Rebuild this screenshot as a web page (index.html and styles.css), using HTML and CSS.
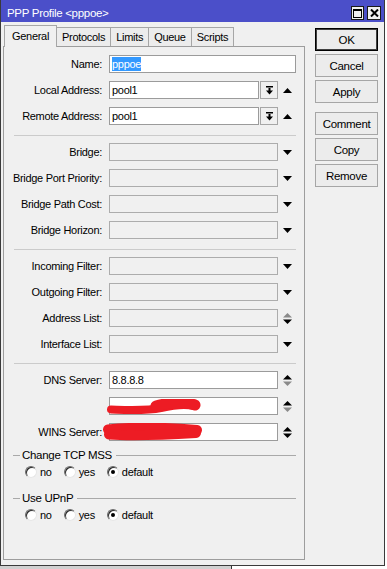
FILE: index.html
```html
<!DOCTYPE html>
<html lang="en">
  <head>
	<meta charset="UTF-8">
	<title>PPP Profile &lt;pppoe&gt;</title>
	<meta name="viewport" content="width=device-width, initial-scale=1.0">
	<link rel="stylesheet" href="styles.css">
  </head>
  <body>

	<div class="window">
	  <div class="titlebar">
		<span class="title">PPP Profile &lt;pppoe&gt;</span>
		<span class="tb-btn"><span class="max-icon"></span></span>
		<span class="tb-btn">
		  <svg width="9" height="8" viewBox="0 0 9 8"><path d="M1 0.5l7 7M8 0.5l-7 7" stroke="#000" stroke-width="2"/></svg>
		</span>
	  </div>

	  <div class="client">
		<div class="tabs-col">
		  <div class="tabs">
			<div class="tab active">General</div>
			<div class="tab">Protocols</div>
			<div class="tab">Limits</div>
			<div class="tab">Queue</div>
			<div class="tab">Scripts</div>
		  </div>

		  <div class="panel">
			<div class="row">
			  <label>Name:</label>
			  <div class="field"><div class="box edit"><span class="sel">pppoe</span></div></div>
			</div>
			<div class="row">
			  <label>Local Address:</label>
			  <div class="field">
				<div class="box edit">pool1</div>
				<div class="dd-btn">
				  <svg width="7" height="9" viewBox="0 0 7 9"><rect x="0" y="0" width="7" height="1.5"/><rect x="2.5" y="2" width="2" height="3"/><path d="M0 4.5h7L3.5 8.5z"/></svg>
				</div>
				<div class="arrow"><svg width="9" height="5" viewBox="0 0 9 5"><path d="M0 5h9L4.5 0z"/></svg></div>
			  </div>
			</div>
			<div class="row">
			  <label>Remote Address:</label>
			  <div class="field">
				<div class="box edit">pool1</div>
				<div class="dd-btn">
				  <svg width="7" height="9" viewBox="0 0 7 9"><rect x="0" y="0" width="7" height="1.5"/><rect x="2.5" y="2" width="2" height="3"/><path d="M0 4.5h7L3.5 8.5z"/></svg>
				</div>
				<div class="arrow"><svg width="9" height="5" viewBox="0 0 9 5"><path d="M0 5h9L4.5 0z"/></svg></div>
			  </div>
			</div>

			<div class="sep"></div>

			<div class="row">
			  <label>Bridge:</label>
			  <div class="field"><div class="box"></div><div class="arrow"><svg width="9" height="5" viewBox="0 0 9 5"><path d="M0 0h9L4.5 5z"/></svg></div></div>
			</div>
			<div class="row">
			  <label>Bridge Port Priority:</label>
			  <div class="field"><div class="box"></div><div class="arrow"><svg width="9" height="5" viewBox="0 0 9 5"><path d="M0 0h9L4.5 5z"/></svg></div></div>
			</div>
			<div class="row">
			  <label>Bridge Path Cost:</label>
			  <div class="field"><div class="box"></div><div class="arrow"><svg width="9" height="5" viewBox="0 0 9 5"><path d="M0 0h9L4.5 5z"/></svg></div></div>
			</div>
			<div class="row">
			  <label>Bridge Horizon:</label>
			  <div class="field"><div class="box"></div><div class="arrow"><svg width="9" height="5" viewBox="0 0 9 5"><path d="M0 0h9L4.5 5z"/></svg></div></div>
			</div>

			<div class="sep"></div>

			<div class="row">
			  <label>Incoming Filter:</label>
			  <div class="field"><div class="box"></div><div class="arrow"><svg width="9" height="5" viewBox="0 0 9 5"><path d="M0 0h9L4.5 5z"/></svg></div></div>
			</div>
			<div class="row">
			  <label>Outgoing Filter:</label>
			  <div class="field"><div class="box"></div><div class="arrow"><svg width="9" height="5" viewBox="0 0 9 5"><path d="M0 0h9L4.5 5z"/></svg></div></div>
			</div>
			<div class="row">
			  <label>Address List:</label>
			  <div class="field"><div class="box"></div><div class="arrow"><svg width="9" height="11" viewBox="0 0 9 11"><path d="M0 4.5h9L4.5 0z" fill="#8a8a8a"/><path d="M0 6.5h9L4.5 11z"/></svg></div></div>
			</div>
			<div class="row">
			  <label>Interface List:</label>
			  <div class="field"><div class="box"></div><div class="arrow"><svg width="9" height="5" viewBox="0 0 9 5"><path d="M0 0h9L4.5 5z"/></svg></div></div>
			</div>

			<div class="sep"></div>

			<div class="row">
			  <label>DNS Server:</label>
			  <div class="field"><div class="box edit">8.8.8.8</div><div class="arrow"><svg width="9" height="11" viewBox="0 0 9 11"><path d="M0 4.5h9L4.5 0z"/><path d="M0 6.5h9L4.5 11z" fill="#8a8a8a"/></svg></div></div>
			</div>
			<div class="row">
			  <label></label>
			  <div class="field">
				<div class="box edit"></div>
				<div class="arrow"><svg width="9" height="11" viewBox="0 0 9 11"><path d="M0 4.5h9L4.5 0z"/><path d="M0 6.5h9L4.5 11z" fill="#8a8a8a"/></svg></div>
				<svg class="scribble dns2" width="96" height="16" viewBox="0 0 96 16">
				  <path d="M5 10.5 C 22 11, 40 12, 55 9 C 68 6, 80 5, 88 7" fill="none" stroke="#ed1c24" stroke-width="8" stroke-linecap="round"/>
				  <path d="M50 7 C 64 3, 80 3, 89 6" fill="none" stroke="#ed1c24" stroke-width="11" stroke-linecap="round"/>
				</svg>
			  </div>
			</div>
			<div class="row">
			  <label>WINS Server:</label>
			  <div class="field">
				<div class="box edit"></div>
				<div class="arrow"><svg width="9" height="11" viewBox="0 0 9 11"><path d="M0 4.5h9L4.5 0z"/><path d="M0 6.5h9L4.5 11z"/></svg></div>
				<svg class="scribble wins" width="102" height="18" viewBox="0 0 102 18">
				  <path d="M6 6.5 C 30 4, 60 4, 95 7" fill="none" stroke="#ed1c24" stroke-width="10" stroke-linecap="round"/>
				  <path d="M7 11.5 C 30 13, 60 12, 94 10" fill="none" stroke="#ed1c24" stroke-width="10" stroke-linecap="round"/>
				</svg>
			  </div>
			</div>

			<div class="group">
			  <div class="group-title">Change TCP MSS</div>
			  <div class="radios">
				<span class="radio"><span class="dot"></span>no</span>
				<span class="radio"><span class="dot"></span>yes</span>
				<span class="radio"><span class="dot checked"></span>default</span>
			  </div>
			</div>

			<div class="group second">
			  <div class="group-title">Use UPnP</div>
			  <div class="radios">
				<span class="radio"><span class="dot"></span>no</span>
				<span class="radio"><span class="dot"></span>yes</span>
				<span class="radio"><span class="dot checked"></span>default</span>
			  </div>
			</div>
		  </div>
		</div>

		<div class="actions">
		  <button class="default">OK</button>
		  <button>Cancel</button>
		  <button>Apply</button>
		  <button class="gap">Comment</button>
		  <button>Copy</button>
		  <button>Remove</button>
		</div>
	  </div>
	</div>

	<div class="desk"><div class="desk-item"></div></div>

  </body>
</html>
```

FILE: styles.css
```css
* { box-sizing: border-box; }

body {
  margin: 0;
  background: #fff;
  font-family: "Liberation Sans", Arial, sans-serif;
  font-size: 11px;
  letter-spacing: -0.3px;
  color: #000;
}

.window {
  width: 385px;
  height: 566px;
  background: #f0f0f0;
  border: 1px solid #3a3a3a;
  border-top: none;
  display: flex;
  flex-direction: column;
}

/* TITLE BAR */
.titlebar {
  height: 22px;
  flex: none;
  background: #4b4fc9;
  color: #fff;
  display: flex;
  align-items: center;
  gap: 3px;
  padding: 4px 3px 0 6px;
}

.title {
  flex: 1;
  font-size: 11.5px;
}

.tb-btn {
  width: 13px;
  height: 14px;
  background: #f0f0f0;
  border: 1px solid #1a1a1a;
  display: flex;
  align-items: center;
  justify-content: center;
}

.tb-btn:last-child {
  width: 14px;
}

.max-icon {
  width: 9px;
  height: 9px;
  border: 1px solid #000;
  border-top-width: 2px;
}

/* CLIENT */
.client {
  display: flex;
  padding: 3px 0 0 2px;
}

.tabs {
  display: flex;
  align-items: flex-end;
  height: 21px;
  padding-left: 1px;
}

.tab {
  height: 19px;
  padding: 0 5px;
  border: 1px solid #a6a6a6;
  border-bottom: none;
  margin-left: -1px;
  background: #ececec;
  display: flex;
  align-items: center;
  white-space: nowrap;
}

.tab.active {
  height: 22px;
  padding: 0 7px;
  margin-left: 0;
  margin-bottom: -1px;
  background: #f0f0f0;
  position: relative;
  z-index: 1;
  padding-bottom: 2px;
}

.panel {
  width: 302px;
  height: 514px;
  border: 1px solid #9d9d9d;
  background: #f0f0f0;
  padding: 8px 8px 0 0;
  display: flex;
  flex-direction: column;
  gap: 8px;
}

.row {
  display: flex;
  align-items: center;
  height: 18px;
}

.row label {
  width: 98px;
  flex: none;
  text-align: right;
  margin-right: 7px;
  white-space: nowrap;
}

.field {
  flex: 1;
  height: 18px;
  display: flex;
  position: relative;
}

.box {
  flex: 1;
  border: 1px solid #acacac;
  background: #f0f0f0;
  padding-left: 2px;
  display: flex;
  align-items: center;
  white-space: nowrap;
}

.box.edit {
  background: #fff;
  border-color: #9b9b9b;
}

.sel {
  background: #3399ff;
  color: #fff;
  padding: 1px 0;
}

.dd-btn {
  width: 18px;
  flex: none;
  border: 1px solid #a6a6a6;
  margin-left: 1px;
  background: #f0f0f0;
  display: flex;
  align-items: center;
  justify-content: center;
}

.arrow {
  width: 18px;
  flex: none;
  display: flex;
  align-items: center;
  justify-content: center;
  padding-left: 1px;
}

.scribble {
  position: absolute;
  pointer-events: none;
}

.scribble.dns2 {
  left: -3px;
  top: 2px;
}

.scribble.wins {
  left: -7px;
  top: 0;
}

.sep {
  height: 1px;
  background: #cbcbcb;
  margin: 2px 0 -1px 10px;
}

/* GROUP BOXES */
.group {
  margin-top: -1px;
}

.group.second {
  margin-top: 5px;
}

.group-title {
  height: 14px;
  display: flex;
  align-items: center;
  gap: 2px;
  font-size: 11.5px;
}

.group-title::before {
  content: "";
  width: 7px;
  height: 1px;
  background: #a9a9a9;
  margin-left: 9px;
}

.group-title::after {
  content: "";
  flex: 1;
  height: 1px;
  background: #a9a9a9;
  margin-left: 2px;
}

.radios {
  display: flex;
  gap: 12px;
  height: 13px;
  margin-top: 3px;
  padding-left: 21px;
  align-items: center;
}

.radio {
  display: flex;
  align-items: center;
  gap: 3px;
}

.dot {
  width: 12px;
  height: 12px;
  border-radius: 50%;
  background: #fff;
  border: 1px solid;
  border-color: #6a6a6a #e6e6e6 #e6e6e6 #6a6a6a;
  box-shadow: inset 1px 1px 0 #2a2a2a;
  display: flex;
  align-items: center;
  justify-content: center;
}

.dot.checked::after {
  content: "";
  width: 4px;
  height: 4px;
  border-radius: 50%;
  background: #000;
}

/* BUTTONS */
.actions {
  width: 63px;
  margin-left: 10px;
  padding-top: 3px;
  display: flex;
  flex-direction: column;
  gap: 3px;
}

.actions button {
  height: 23px;
  padding: 0;
  border: 1px solid #a6a6a6;
  background: #ececec;
  font-family: inherit;
  font-size: 11.5px;
  letter-spacing: -0.3px;
  color: #000;
}

.actions button.default {
  border-color: #000;
  box-shadow: inset 0 0 0 1px #404040;
}

.actions button.gap {
  margin-top: 6px;
}

.desk {
  height: 3px;
  display: flex;
}

.desk-item {
  width: 232px;
  background: #d0d0d0;
  border-right: 1px solid #333;
}
```
